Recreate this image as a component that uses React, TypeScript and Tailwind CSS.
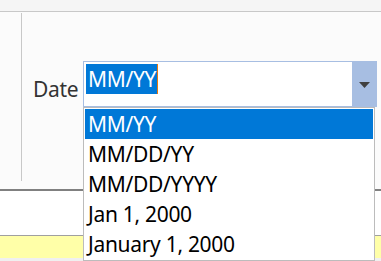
import React from 'react';

const formats = ['MM/YY', 'MM/DD/YY', 'MM/DD/YYYY', 'Jan 1, 2000', 'January 1, 2000'];

export default function App() {
    const selected = 0;
    return (
        <div
            className="relative h-[261px] w-[381px] overflow-hidden bg-[#fbfbfb] text-[21px] tracking-[-0.3px] text-[#1a1a1a]"
            style={{ fontFamily: '"Noto Sans", "Open Sans", sans-serif' }}
        >
            <div className="h-[12px] border-b border-[#c8c8c8] bg-[#f5f5f5]" />
            <div className="flex h-[177px]">
                <div className="mt-[1px] h-[168px] w-[22px] border-r border-[#c8c8c8]" />
                <div className="flex items-start pl-[11px] pt-[49px]">
                    <span className="mt-[13px] w-[50px] leading-[30px] text-[#333]">Date</span>
                    <div className="flex h-[46px] w-[294px] border border-[#a7bee2]">
                        <div className="flex-1 bg-white pl-[2px] pt-[2px]">
                            <span className="inline-block h-[30px] border-r border-[#e8780c] bg-[#0078d7] pl-[2px] pr-[1px] leading-[30px] text-white">
                                MM/YY
                            </span>
                        </div>
                        <div className="flex w-[24px] items-center justify-center bg-[#a7bee2]">
                            <svg width="11" height="6" viewBox="0 0 11 6" className="mt-[1px]">
                                <path d="M0 0 H11 L5.5 6 Z" fill="#404040" />
                            </svg>
                        </div>
                    </div>
                </div>
            </div>
            <div className="h-[2px] bg-[#808080]" />
            <div className="h-[44px] bg-white" />
            <div className="h-[1px] bg-[#a0a0a0]" />
            <div className="h-[22px] bg-[#ffffa8]" />
            <div className="h-[4px] bg-[#f0f0f0]" />

            <ul className="absolute left-[83px] top-[107px] w-[292px] border border-[#bcbcbc] bg-white p-[1px]">
                {formats.map((f, i) => (
                    <li
                        key={f}
                        className={
                            i === selected
                                ? 'h-[30px] bg-[#0078d7] pl-[3px] leading-[30px] text-white'
                                : 'h-[30px] pl-[3px] leading-[30px] text-black'
                        }
                    >
                        {f}
                    </li>
                ))}
            </ul>
        </div>
    );
}
